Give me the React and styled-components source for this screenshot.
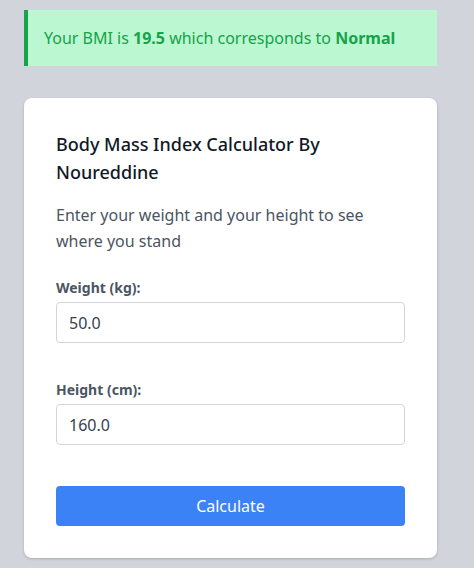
import React, { useState } from 'react'
import styled, { createGlobalStyle } from 'styled-components'

const GlobalStyle = createGlobalStyle`
  html, body {
    margin: 0;
    padding: 0;
    background: #d1d5db;
    font-family: "Noto Sans", "Open Sans", sans-serif;
  }
  * { box-sizing: border-box; }
`

const Page = styled.div`
  padding: 10px 0 0 24px;
  width: 437px;
  min-height: 568px;
`

const Alert = styled.div`
  height: 56px;
  display: flex;
  align-items: center;
  padding-left: 16px;
  background: #bbf7d0;
  border-left: 4px solid #16a34a;
  color: #16a34a;
  font-size: 16px;
  margin-bottom: 32px;
`

const Card = styled.div`
  background: #fff;
  border-radius: 8px;
  padding: 32px;
  box-shadow: 0 1px 3px rgba(0, 0, 0, 0.12), 0 1px 2px rgba(0, 0, 0, 0.08);
`

const Title = styled.h1`
  margin: 0 0 16px;
  font-size: 18px;
  line-height: 28px;
  font-weight: 500;
  color: #111827;
`

const Description = styled.p`
  margin: 0;
  font-size: 16px;
  line-height: 26px;
  color: #4b5563;
`

const Field = styled.div`
  margin-top: ${props => props.first ? '24px' : '37px'};
`

const Label = styled.label`
  display: block;
  font-size: 14px;
  line-height: 20px;
  font-weight: 700;
  color: #4b5563;
  margin-bottom: 4px;
`

const Input = styled.input`
  display: block;
  width: 100%;
  height: 41px;
  padding: 0 12px;
  border: 1px solid #d1d5db;
  border-radius: 4px;
  font-family: inherit;
  font-size: 16px;
  color: #374151;
  outline: none;
`

const Button = styled.button`
  display: block;
  width: 100%;
  height: 40px;
  margin-top: 41px;
  border: none;
  border-radius: 4px;
  background: #3b82f6;
  color: #fff;
  font-family: inherit;
  font-size: 16px;
  cursor: pointer;
`

const App = () => {
  const [weight, setWeight] = useState('50.0')
  const [height, setHeight] = useState('160.0')

  return (
    <Page>
      <GlobalStyle />
      <Alert>
        <span>Your BMI is <b>19.5</b> which corresponds to <b>Normal</b></span>
      </Alert>
      <Card>
        <Title>Body Mass Index Calculator By Noureddine</Title>
        <Description>Enter your weight and your height to see where you stand</Description>
        <Field first>
          <Label>Weight (kg):</Label>
          <Input value={weight} onChange={e => setWeight(e.target.value)} />
        </Field>
        <Field>
          <Label>Height (cm):</Label>
          <Input value={height} onChange={e => setHeight(e.target.value)} />
        </Field>
        <Button>Calculate</Button>
      </Card>
    </Page>
  )
}

export default App
